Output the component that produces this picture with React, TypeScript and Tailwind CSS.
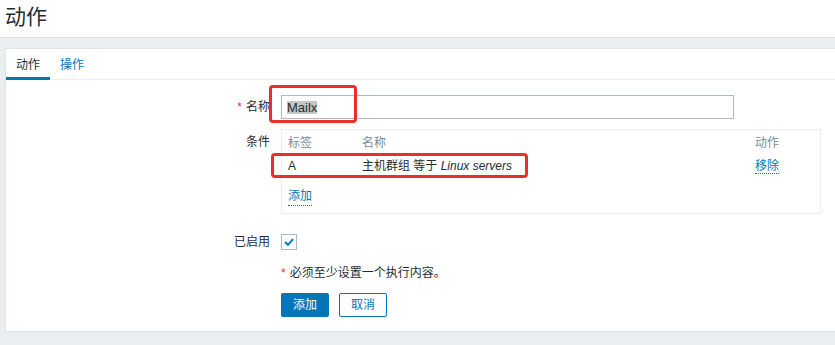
import React from "react";

const font = { fontFamily: '"Liberation Sans", "Noto Sans CJK SC", sans-serif' };

function FormRow({ label, required, children, alignTop }: { label: string; required?: boolean; children: React.ReactNode; alignTop?: boolean }) {
  return (
    <div className={`flex gap-[11px] ${alignTop ? "items-start" : "items-center"}`}>
      <div className={`w-[264px] text-right text-[#1f2c33] ${alignTop ? "pt-[4px]" : ""}`}>
        {required && <span className="text-[#e33734] mr-[4px]">*</span>}
        {label}
      </div>
      {children}
    </div>
  );
}

export default function App() {
  return (
    <div style={font} className="relative w-[835px] h-[345px] overflow-hidden bg-[#ebeef0] text-[12px] text-[#1f2c33]">
      <div className="h-[38px] bg-white border-b border-[#dfe4e7] pl-[5px] pt-[3px]">
        <h1 className="text-[21px] leading-[28px] text-[#1f2c33]">动作</h1>
      </div>

      <div className="ml-[5px] mt-[10px] bg-white border border-r-0 border-[#dfe4e7]">
        <div className="flex h-[31px] border-b border-[#ebeef0]">
          <div className="px-[10px] pt-[3px] flex items-center border-b-[3px] border-[#0275b8] mb-[-1px] text-[#1f2c33]">动作</div>
          <div className="px-[10px] pt-[1px] flex items-center text-[#0275b8]">操作</div>
        </div>

        <div className="pt-[15px] pb-[14px] flex flex-col">
          <FormRow label="名称" required>
            <div className="w-[453px] h-[24px] border border-[#acbbc2] bg-white flex items-center px-[5px]">
              <span className="bg-[#c6c6c6] text-[13px] leading-[13px]">Mailx</span>
            </div>
          </FormRow>

          <div className="mt-[10px]">
            <FormRow label="条件" alignTop>
              <div className="w-[540px] border border-[#ebeef0] px-[6px] pb-[6px]">
                <div className="grid grid-cols-[74px_393px_1fr] h-[25px] items-center text-[#768d99]">
                  <span>标签</span>
                  <span>名称</span>
                  <span>动作</span>
                </div>
                <div className="grid grid-cols-[74px_393px_1fr] h-[22px] items-center">
                  <span>A</span>
                  <span>
                    主机群组 等于 <i>Linux servers</i>
                  </span>
                  <span>
                    <span className="text-[#0275b8] border-b border-dotted border-[#0275b8]">移除</span>
                  </span>
                </div>
                <div className="mt-[8px] h-[22px] flex items-center">
                  <span className="text-[#0275b8] border-b border-dotted border-[#0275b8]">添加</span>
                </div>
              </div>
            </FormRow>
          </div>

          <div className="mt-[19px]">
            <FormRow label="已启用">
              <div className="w-[16px] h-[16px] border border-[#acbbc2] flex items-center justify-center">
                <svg width="10" height="8" viewBox="0 0 10 8">
                  <path d="M1 4 L4 6.8 L9 1.2" fill="none" stroke="#0275b8" strokeWidth="2" />
                </svg>
              </div>
            </FormRow>
          </div>

          <div className="mt-[14px] pl-[275px] h-[16px] flex items-center">
            <span className="text-[#e33734] mr-[4px]">*</span>
            必须至少设置一个执行内容。
          </div>

          <div className="mt-[12px] pl-[275px] flex gap-[10px]">
            <button className="w-[48px] h-[24px] bg-[#0275b8] text-white rounded-[2px]">添加</button>
            <button className="w-[48px] h-[24px] bg-white text-[#0275b8] border border-[#0275b8] rounded-[2px]">取消</button>
          </div>
        </div>
      </div>

      <div className="absolute left-[269px] top-[85px] w-[88px] h-[38px] border-[3px] border-[#e8302a] rounded-[4px]" />
      <div className="absolute left-[271px] top-[153px] w-[257px] h-[25px] border-[3px] border-[#e8302a] rounded-[4px]" />
    </div>
  );
}
